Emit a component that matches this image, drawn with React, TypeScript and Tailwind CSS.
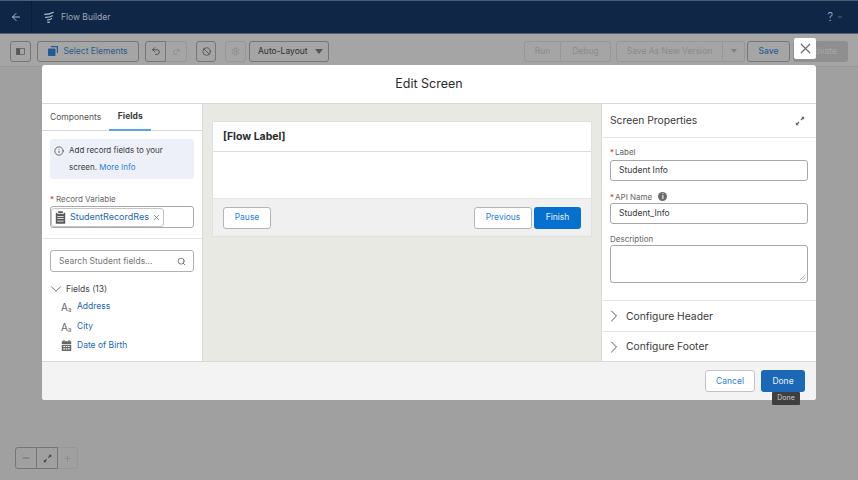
import React from 'react';
import {
  ArrowLeft,
  ChevronDown,
  ChevronRight,
  Ban,
  Undo2,
  Redo2,
  Settings,
  Search,
  Info,
  X,
  Minus,
  Plus,
} from 'lucide-react';

const ExpandIcon = ({ className }: { className?: string }) => (
  <svg viewBox="0 0 12 12" className={className} fill="currentColor">
    <path d="M7.500 1H11v3.500L9.800 3.300 7.700 5.400 6.600 4.300l2.100-2.100z" />
    <path d="M4.500 11H1V7.500l1.200 1.200 2.100-2.100 1.100 1.100-2.100 2.100z" />
  </svg>
);

const FlowIcon = () => (
  <svg viewBox="0 0 14 14" className="w-[12px] h-[12px] text-[#b4bdca]" fill="none" stroke="currentColor" strokeWidth="1.3" strokeLinecap="round">
    <path d="M2 4c3 0 7-.5 10-2.500" />
    <path d="M3 7.500c3 0 6-.5 8-2" />
    <path d="M5 10.500c2 0 4-.4 5-1.500" />
    <path d="M5.500 13h2" />
  </svg>
);

const SidebarIcon = () => (
  <svg viewBox="0 0 10 8" className="w-[9px] h-[7px] text-[#555]">
    <rect x="0.500" y="0.500" width="9" height="7" fill="none" stroke="currentColor" strokeWidth="0.8" />
    <rect x="0.500" y="0.500" width="4" height="7" fill="currentColor" />
  </svg>
);

const SelectIcon = () => (
  <svg viewBox="0 0 10 10" className="w-[10px] h-[10px] text-[#1f5c96]" fill="currentColor">
    <path d="M3 0h7v7H8.800V1.200H3z" />
    <rect x="0" y="2.500" width="7.500" height="7.500" rx="0.800" />
  </svg>
);

const ClipboardIcon = () => (
  <svg viewBox="0 0 14 16" className="w-[11px] h-[13px] text-[#5c5c5c]" fill="currentColor">
    <path d="M4 0h6v2.500H4z" />
    <path d="M1 2h2v1.500h8V2h2v14H1zM3 6v1h8V6zm0 3v1h8V9zm0 3v1h8v-1z" fillRule="evenodd" />
  </svg>
);

const CalendarIcon = () => (
  <svg viewBox="0 0 14 14" className="w-[11px] h-[11px] text-[#666]" fill="currentColor">
    <path d="M3 0h1.500v2H3zM9.500 0H11v2H9.500z" />
    <path d="M1 1.500h12V5H1zM1 6h12v8H1zm2 1.500v1.500h2V7.500zm3 0v1.500h2V7.500zm3 0v1.500h2V7.500zm-6 3V12h2v-1.500zm3 0V12h2v-1.500zm3 0V12h2v-1.500z" fillRule="evenodd" />
  </svg>
);

const TextTypeIcon = () => (
  <span className="flex items-end w-[12px] h-[11px] text-[#666] leading-none">
    <span className="text-[10px] leading-none">A</span>
    <span className="text-[6px] leading-none -mb-px">a</span>
  </span>
);

function FieldRow({ icon, label }: { icon: React.ReactNode; label: string }) {
  return (
    <div className="flex items-center h-[19.500px] pl-[19px]">
      <span className="w-[16px] flex justify-start">{icon}</span>
      <span className="text-[#1b68b3] text-[8.500px]">{label}</span>
    </div>
  );
}

function Accordion({ label }: { label: string }) {
  return (
    <div className="flex items-center h-[30.500px] pl-[2px] pt-[1px] border-t border-[#e4e4e4]">
      <ChevronRight className="w-[20px] h-[20px] text-[#555]" strokeWidth={1.2} />
      <span className="ml-[2px] text-[10.300px] text-[#3a3a3a]">{label}</span>
    </div>
  );
}

export default function App() {
  return (
    <div
      className="relative w-[858px] h-[480px] overflow-hidden bg-[#a0a0a0] flex flex-col"
      style={{ fontFamily: 'Inter, "Liberation Sans", sans-serif' }}
    >
      {/* top bar */}
      <div className="h-[34px] shrink-0 bg-[#0f2647] border-t border-[#4a5f74] border-b-[#53606e] border-b flex items-center text-[#b4bdca]">
        <div className="w-[32px] h-full flex items-center justify-center border-r border-[#0b1d38]">
          <ArrowLeft className="w-[12px] h-[12px]" />
        </div>
        <div className="ml-[11px] flex items-center gap-[6px]">
          <FlowIcon />
          <span className="text-[8.500px] text-[#9ea8b6]">Flow Builder</span>
        </div>
        <div className="ml-auto mr-[15px] flex items-center gap-[4px]">
          <span className="text-[11px] font-light">?</span>
          <ChevronDown className="w-[6px] h-[6px]" />
        </div>
      </div>

      {/* toolbar */}
      <div className="h-[33px] shrink-0 bg-[#a5a5a5] border-b border-[#999] flex items-center pt-[2px] px-[10px] text-[8.500px]">
        <div className="w-[21px] h-[21px] border border-[#767676] rounded-[3px] flex items-center justify-center">
          <SidebarIcon />
        </div>
        <div className="ml-[6px] w-[102px] h-[21px] border border-[#767676] rounded-[3px] flex items-center justify-center gap-[5px] text-[#2a5c8c]">
          <SelectIcon />
          Select Elements
        </div>
        <div className="ml-[6px] w-[42px] h-[21px] flex">
          <div className="w-[21px] border border-[#767676] rounded-l-[3px] flex items-center justify-center">
            <Undo2 className="w-[10px] h-[10px] text-[#444]" />
          </div>
          <div className="w-[21px] border border-l-0 border-[#979797] rounded-r-[3px] flex items-center justify-center">
            <Redo2 className="w-[9px] h-[9px] text-[#888]" />
          </div>
        </div>
        <div className="ml-[9px] w-[20px] h-[21px] border border-[#767676] rounded-[3px] flex items-center justify-center">
          <Ban className="w-[9px] h-[9px] text-[#444]" />
        </div>
        <div className="ml-[9px] w-[21px] h-[21px] border border-[#979797] rounded-[3px] flex items-center justify-center">
          <Settings className="w-[9px] h-[9px] text-[#888]" />
        </div>
        <div className="ml-[3px] w-[80px] h-[21px] border border-[#767676] rounded-[3px] flex items-center pl-[8px] text-[#2f2f2f]">
          Auto-Layout
          <span className="ml-[7px] w-0 h-0 border-x-[4px] border-x-transparent border-t-[5px] border-t-[#555]" />
        </div>

        <div className="ml-auto flex h-[21px] text-[#8b8b8b]">
          <div className="w-[37px] border border-[#979797] rounded-l-[3px] flex items-center justify-center">Run</div>
          <div className="w-[50px] border border-l-0 border-[#979797] rounded-r-[3px] flex items-center justify-center">Debug</div>
        </div>
        <div className="ml-[5px] flex h-[21px] text-[#8b8b8b]">
          <div className="w-[107px] border border-[#979797] rounded-l-[3px] flex items-center justify-center">Save As New Version</div>
          <div className="w-[22px] border border-l-0 border-[#979797] rounded-r-[3px] flex items-center justify-center">
            <span className="w-0 h-0 border-x-[3.500px] border-x-transparent border-t-[4px] border-t-[#808080]" />
          </div>
        </div>
        <div className="ml-[2px] w-[43px] h-[21px] border border-[#767676] rounded-[3px] flex items-center justify-center text-[#26609b] font-medium">
          Save
        </div>
        <div className="ml-[3px] w-[55px] h-[21px] bg-[#8f8f8f] rounded-[3px] flex items-center justify-center text-[#a8a8a8]">
          Activate
        </div>
      </div>

      {/* zoom controls on the canvas */}
      <div className="absolute left-[15px] top-[447px] flex h-[22px]">
        <div className="w-[22px] border border-[#767676] rounded-l-[3px] flex items-center justify-center">
          <Minus className="w-[10px] h-[10px] text-[#666]" />
        </div>
        <div className="w-[21px] border border-l-0 border-[#767676] flex items-center justify-center">
          <ExpandIcon className="w-[9px] h-[9px] text-[#444]" />
        </div>
        <div className="w-[20px] border border-l-0 border-[#979797] rounded-r-[3px] flex items-center justify-center">
          <Plus className="w-[9px] h-[9px] text-[#888]" />
        </div>
      </div>

      {/* close button */}
      <div className="absolute left-[794px] top-[38px] w-[22px] h-[21px] bg-white rounded-[2px] flex items-center justify-center">
        <X className="w-[17px] h-[17px] text-[#6b6b6b]" strokeWidth={1.7} />
      </div>

      {/* modal */}
      <div className="absolute left-[42px] top-[65px] w-[774px] h-[335px] bg-white rounded-[3px] flex flex-col overflow-hidden">
        <div className="h-[39px] shrink-0 flex items-center justify-center pt-[1px] border-b border-[#d8d8d8] text-[12.500px] text-[#2b2b2b]">
          Edit Screen
        </div>

        <div className="flex-1 flex min-h-0">
          {/* left panel */}
          <div className="w-[161px] shrink-0 border-r border-[#d8d8d8] flex flex-col">
            <div className="h-[27px] flex border-b border-[#d8d8d8] text-[8.500px] pl-[8px]">
              <div className="h-full flex items-center text-[#555]">Components</div>
              <div className="relative h-[27px] ml-[8px] w-[42px] flex items-center justify-center font-bold text-[#3a3a3a] border-b-2 border-[#5aa5ea]">
                Fields
              </div>
            </div>
            <div className="mx-[8px] mt-[8px] h-[40px] bg-[#eef0f9] rounded-[3px] pl-[3px] pt-[3px] flex">
              <Info className="w-[10px] h-[10px] mt-[4px] ml-[1px] text-[#555]" />
              <div className="ml-[5px] text-[8px] leading-[17px] text-[#3a3a3a]">
                Add record fields to your
                <br />
                screen. <span className="text-[#2d80d3]">More Info</span>
              </div>
            </div>
            <div className="mx-[8px] mt-[13px] h-[14px] text-[8px] text-[#666] flex items-center">
              <span className="text-[#d8232a] mr-[2px]">*</span>Record Variable
            </div>
            <div className="mx-[8px] h-[22px] border border-[#a8a8a8] rounded-[3px] flex items-center">
              <div className="h-[19px] w-[113px] border border-[#c4c4c4] rounded-[3px] flex items-center pl-[3px]">
                <ClipboardIcon />
                <span className="ml-[4px] text-[9px] text-[#1b68b3]">StudentRecordRes</span>
                <X className="ml-[3px] w-[9px] h-[9px] text-[#666]" />
              </div>
            </div>
            <div className="mt-[10px] border-t border-[#e4e4e4] flex-1 flex flex-col min-h-0">
              <div className="mx-[8px] mt-[11px] h-[22px] border border-[#b0b0b0] rounded-[3px] flex items-center pl-[8px] pr-[7px] text-[8.500px] text-[#777]">
                Search Student fields...
                <Search className="ml-auto w-[9px] h-[9px] text-[#555]" />
              </div>
              <div className="mt-[9px] h-[16px] flex items-center pl-[5px]">
                <ChevronDown className="w-[18px] h-[18px] text-[#555]" strokeWidth={1.1} />
                <span className="ml-[1px] text-[8.500px] text-[#444]">Fields (13)</span>
              </div>
              <FieldRow icon={<TextTypeIcon />} label="Address" />
              <FieldRow icon={<TextTypeIcon />} label="City" />
              <FieldRow icon={<CalendarIcon />} label="Date of Birth" />
            </div>
          </div>

          {/* canvas */}
          <div className="w-[398px] shrink-0 bg-[#e9e9e4] pt-[17px] px-[9px]">
            <div className="bg-white border border-[#e0e0e0] h-[116px] flex flex-col">
              <div className="h-[30px] flex items-center pl-[10px] text-[10.500px] font-bold text-[#2b2b2b] border-b border-[#dcdcdc]">
                [Flow Label]
              </div>
              <div className="h-[46px]" />
              <div className="flex-1 bg-[#f0f0f0] border-t border-[#e4e4e4] flex items-center px-[10px] text-[8.500px]">
                <div className="w-[48px] h-[22px] bg-white border border-[#b5b5b5] rounded-[3px] flex items-center justify-center text-[#2d80d3]">
                  Pause
                </div>
                <div className="ml-auto w-[58px] h-[22px] bg-white border border-[#b5b5b5] rounded-[3px] flex items-center justify-center text-[#2d80d3]">
                  Previous
                </div>
                <div className="ml-[2px] w-[47px] h-[22px] bg-[#0670cf] rounded-[3px] flex items-center justify-center text-[#e8f2fb]">
                  Finish
                </div>
              </div>
            </div>
          </div>

          {/* right panel */}
          <div className="flex-1 border-l border-[#d8d8d8] flex flex-col min-w-0">
            <div className="h-[34px] shrink-0 flex items-center pl-[8px] pr-[11px] border-b border-[#e4e4e4] text-[10.300px] text-[#3a3a3a]">
              Screen Properties
              <ExpandIcon className="ml-auto w-[10px] h-[10px] text-[#666]" />
            </div>
            <div className="px-[8px] flex-1 flex flex-col">
              <div className="mt-[8px] h-[12px] flex items-center text-[8px] text-[#666]">
                <span className="text-[#d8232a] mr-[1px]">*</span>Label
              </div>
              <div className="mt-[2px] h-[21px] border border-[#a8a8a8] rounded-[3px] flex items-center pl-[8px] text-[8.500px] text-[#3a3a3a]">
                Student Info
              </div>
              <div className="mt-[9px] h-[13px] flex items-center text-[8px] text-[#666]">
                <span className="text-[#d8232a] mr-[1px]">*</span>API Name
                <span className="ml-[6px] w-[9px] h-[9px] rounded-full bg-[#6b6b6b] text-white text-[6px] font-bold flex items-center justify-center">
                  i
                </span>
              </div>
              <div className="h-[21px] border border-[#a8a8a8] rounded-[3px] flex items-center pl-[8px] text-[8.500px] text-[#3a3a3a]">
                Student_Info
              </div>
              <div className="mt-[9px] h-[12px] flex items-center text-[8px] text-[#666]">Description</div>
              <div className="h-[38px] border border-[#a8a8a8] rounded-[3px] relative">
                <svg viewBox="0 0 8 8" className="absolute right-[1px] bottom-[1px] w-[7px] h-[7px] text-[#888]" stroke="currentColor" strokeWidth="0.8">
                  <path d="M1 7l6-6M4 7l3-3" />
                </svg>
              </div>
            </div>
            <Accordion label="Configure Header" />
            <Accordion label="Configure Footer" />
          </div>
        </div>

        {/* footer */}
        <div className="h-[39px] shrink-0 bg-[#f3f3f3] border-t border-[#d8d8d8] flex items-center justify-end pr-[11px] text-[8.500px]">
          <div className="w-[50px] h-[22px] bg-white border border-[#c4c4c4] rounded-[3px] flex items-center justify-center text-[#2d80d3]">
            Cancel
          </div>
          <div className="ml-[6px] w-[44px] h-[22px] bg-[#1b68b7] rounded-[3px] flex items-center justify-center text-[#e8f2fb]">
            Done
          </div>
        </div>
      </div>

      {/* tooltip */}
      <div className="absolute left-[772px] top-[392px] w-[28px] h-[13px] bg-[#3f3f3f] rounded-[1px] flex items-center justify-center text-[7px] text-[#d0d0d0]">
        Done
      </div>
    </div>
  );
}
